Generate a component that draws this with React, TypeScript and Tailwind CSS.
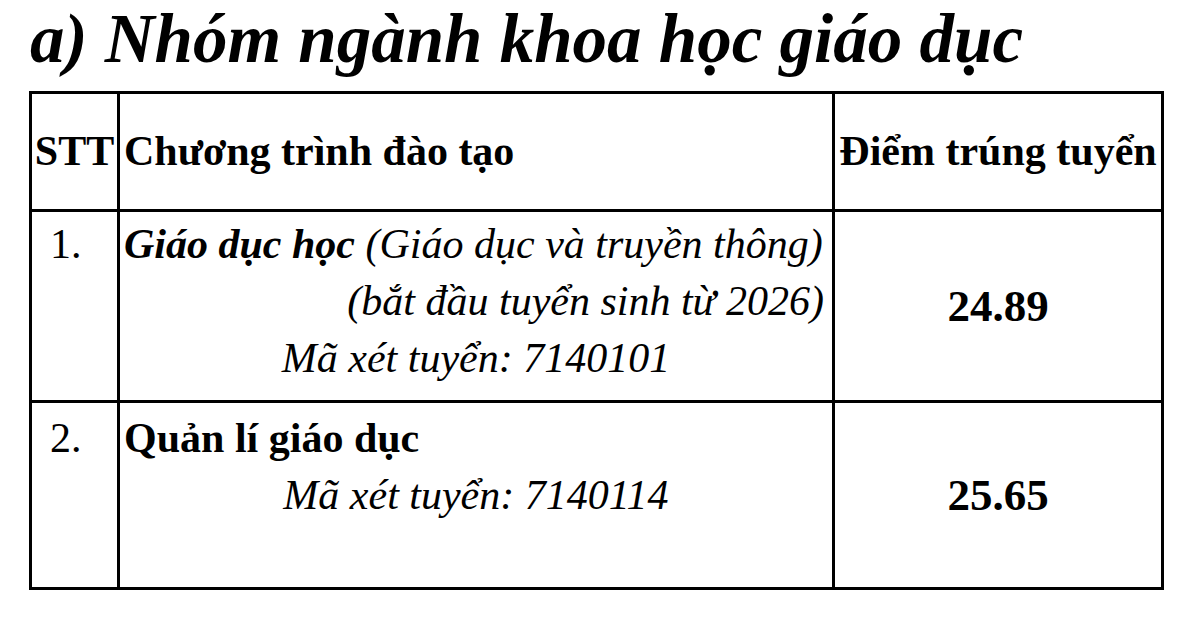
export default function App() {
  return (
    <div className="w-[1200px] h-[617px] bg-white text-black font-['Liberation_Serif','Times_New_Roman',serif] overflow-hidden">
      <h1 className="pl-[30px] pt-[5px] text-[69px] leading-[69px] font-bold italic">
        a) Nhóm ngành khoa học giáo dục
      </h1>

      <div className="ml-[29px] mt-[17px] w-[1135px] grid grid-cols-[88px_715px_329px] border-l-[3px] border-t-[3px] border-black text-[42px] leading-[57px]">
        {/* header */}
        <div className="h-[118px] border-r-[3px] border-b-[3px] border-black flex items-center justify-center font-bold">
          STT
        </div>
        <div className="h-[118px] border-r-[3px] border-b-[3px] border-black flex items-center pl-[4px] font-bold">
          Chương trình đào tạo
        </div>
        <div className="h-[118px] border-r-[3px] border-b-[3px] border-black flex items-center justify-center font-bold">
          Điểm trúng tuyển
        </div>

        {/* row 1 */}
        <div className="h-[191px] border-r-[3px] border-b-[3px] border-black pl-[18px] pt-[4px]">1.</div>
        <div className="h-[191px] border-r-[3px] border-b-[3px] border-black pt-[4px] flex flex-col">
          <p className="pl-[4px] italic">
            <span className="font-bold">Giáo dục học</span> (Giáo dục và truyền thông)
          </p>
          <p className="italic text-right pr-[8px]">(bắt đầu tuyển sinh từ 2026)</p>
          <p className="italic text-center">Mã xét tuyển: 7140101</p>
        </div>
        <div className="h-[191px] border-r-[3px] border-b-[3px] border-black flex items-center justify-center font-bold text-[45px]">
          24.89
        </div>

        {/* row 2 */}
        <div className="h-[187px] border-r-[3px] border-b-[3px] border-black pl-[18px] pt-[7px]">2.</div>
        <div className="h-[187px] border-r-[3px] border-b-[3px] border-black pt-[7px] flex flex-col">
          <p className="pl-[4px] font-bold">Quản lí giáo dục</p>
          <p className="italic text-center">Mã xét tuyển: 7140114</p>
        </div>
        <div className="h-[187px] border-r-[3px] border-b-[3px] border-black flex items-center justify-center font-bold text-[45px]">
          25.65
        </div>
      </div>
    </div>
  );
}
